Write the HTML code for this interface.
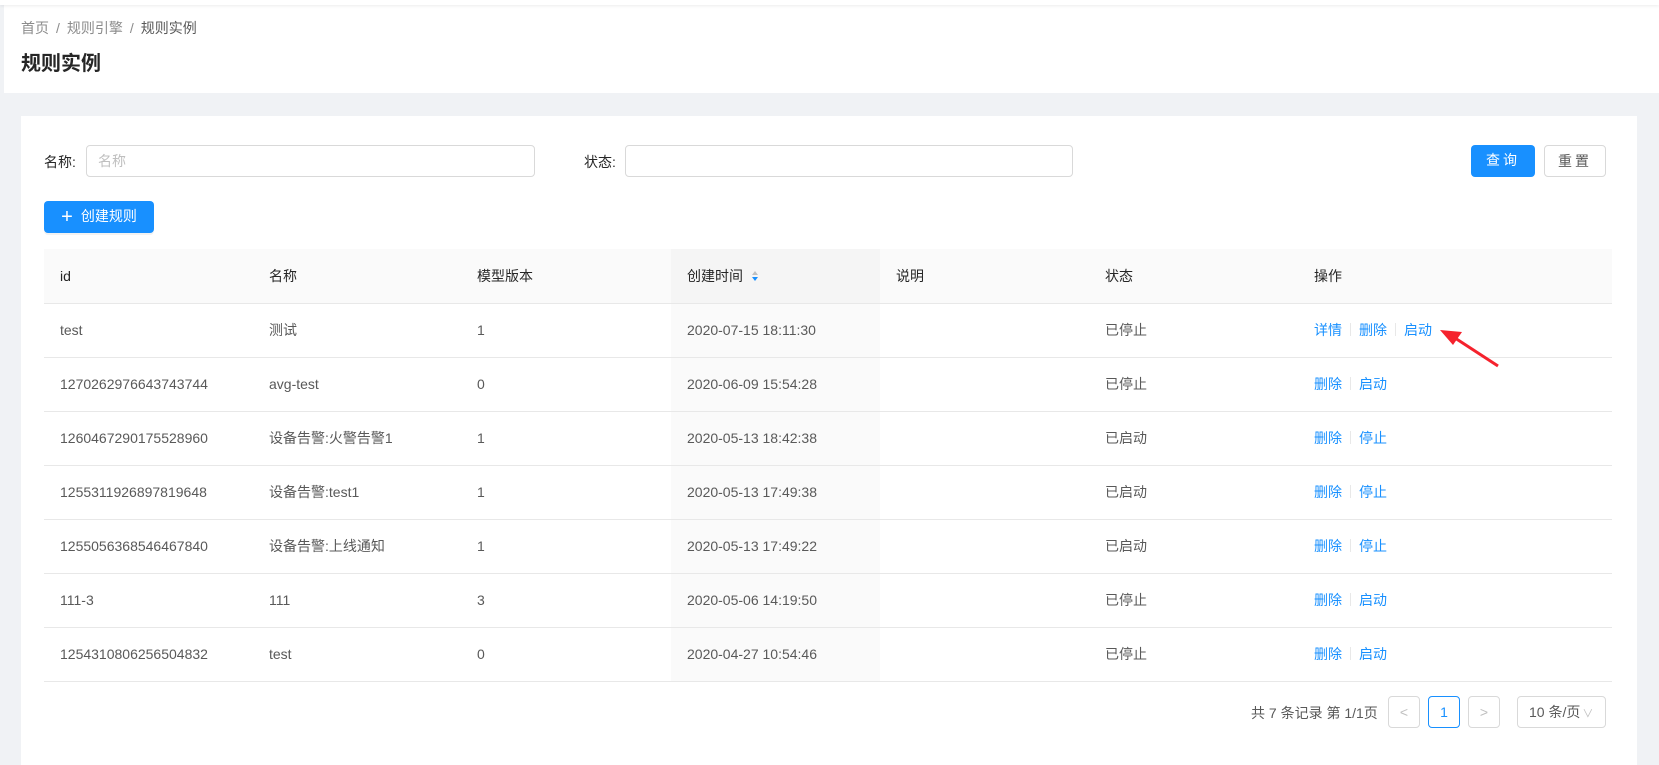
<!DOCTYPE html><html><head><meta charset="utf-8"><style>
*{box-sizing:border-box;margin:0;padding:0}
body{width:1659px;height:765px;overflow:hidden;background:#f0f2f5;font-family:"Liberation Sans","Noto Sans CJK SC",sans-serif;font-size:14px;color:#595959;position:relative}
.hdr{position:absolute;left:4px;top:5px;right:0;height:88px;background:#fff}
.topbar{position:absolute;left:0;top:0;width:1659px;height:5px;background:#fff;box-shadow:0 1px 3px rgba(0,0,0,.08)}
.bc{position:absolute;left:21px;top:18px;font-size:14px;color:#8c8c8c}
.bc span.s{margin:0 7px}
.bc .cur{color:#595959}
.title{position:absolute;left:21px;top:47px;font-size:20px;font-weight:bold;color:#262626}
.card{position:absolute;left:21px;top:116px;width:1616px;height:649px;background:#fff}
.abs{position:absolute}
.inp{position:absolute;height:32px;border:1px solid #d9d9d9;border-radius:4px;background:#fff;padding-left:11px;line-height:30px;color:#bfbfbf}
.btn{position:absolute;height:32px;border-radius:4px;line-height:30px;text-align:center;font-size:14px}
table{position:absolute;left:23px;top:133px;width:1568px;border-collapse:collapse}
th,td{text-align:left;padding-left:16px;border-bottom:1px solid #e8e8e8;font-weight:normal}
th{height:54px;background:#fafafa;color:#262626}
td{height:54px;color:#595959}
.sort{background:#f5f5f5}
td.sort{background:#fafafa}
a{color:#1890ff;text-decoration:none}
.d{display:inline-block;width:1px;height:13px;background:#e8e8e8;margin:0 8px;vertical-align:-1px}
.pg{position:absolute;height:32px;border:1px solid #d9d9d9;border-radius:4px;text-align:center;line-height:30px;color:#bfbfbf}
</style></head><body>
<div class="hdr"></div><div class="topbar"></div>
<div class="bc">首页<span class="s">/</span>规则引擎<span class="s">/</span><span class="cur">规则实例</span></div>
<div class="title">规则实例</div>
<div class="card">
<div class="abs" style="left:23px;top:36px;color:#262626">名称:</div>
<div class="inp" style="left:65px;top:29px;width:449px">名称</div>
<div class="abs" style="left:563px;top:36px;color:#262626">状态:</div>
<div class="inp" style="left:604px;top:29px;width:448px"></div>
<div class="btn" style="left:1450px;top:29px;width:64px;background:#1890ff;color:#fff;letter-spacing:3px">查询</div>
<div class="btn" style="left:1523px;top:29px;width:62px;border:1px solid #d9d9d9;color:#595959;letter-spacing:3px">重置</div>
<div class="btn" style="left:23px;top:85px;width:110px;background:#1890ff;color:#fff;box-shadow:0 2px 0 rgba(0,0,0,.05)"><span style="font-size:20px;vertical-align:-2px;margin-right:8px">+</span>创建规则</div>
<table>
<tr><th style="width:209px">id</th><th style="width:208px">名称</th><th style="width:210px">模型版本</th><th class="sort" style="width:209px">创建时间 <svg width="8" height="12" viewBox="0 0 8 12" style="vertical-align:-1px;margin-left:4px"><path d="M4 1L7 5H1z" fill="#bfbfbf"/><path d="M4 11L7 7H1z" fill="#1890ff"/></svg></th><th style="width:209px">说明</th><th style="width:209px">状态</th><th>操作</th></tr>
<tr><td>test</td><td>测试</td><td>1</td><td class="sort">2020-07-15 18:11:30</td><td></td><td>已停止</td><td><a>详情</a><span class="d"></span><a>删除</a><span class="d"></span><a>启动</a></td></tr>
<tr><td>1270262976643743744</td><td>avg-test</td><td>0</td><td class="sort">2020-06-09 15:54:28</td><td></td><td>已停止</td><td><a>删除</a><span class="d"></span><a>启动</a></td></tr>
<tr><td>1260467290175528960</td><td>设备告警:火警告警1</td><td>1</td><td class="sort">2020-05-13 18:42:38</td><td></td><td>已启动</td><td><a>删除</a><span class="d"></span><a>停止</a></td></tr>
<tr><td>1255311926897819648</td><td>设备告警:test1</td><td>1</td><td class="sort">2020-05-13 17:49:38</td><td></td><td>已启动</td><td><a>删除</a><span class="d"></span><a>停止</a></td></tr>
<tr><td>1255056368546467840</td><td>设备告警:上线通知</td><td>1</td><td class="sort">2020-05-13 17:49:22</td><td></td><td>已启动</td><td><a>删除</a><span class="d"></span><a>停止</a></td></tr>
<tr><td>111-3</td><td>111</td><td>3</td><td class="sort">2020-05-06 14:19:50</td><td></td><td>已停止</td><td><a>删除</a><span class="d"></span><a>启动</a></td></tr>
<tr><td>1254310806256504832</td><td>test</td><td>0</td><td class="sort">2020-04-27 10:54:46</td><td></td><td>已停止</td><td><a>删除</a><span class="d"></span><a>启动</a></td></tr>
</table>
<div class="abs" style="left:1230px;top:587px;color:#595959">共 7 条记录 第 1/1页</div>
<div class="pg" style="left:1367px;top:580px;width:32px">&lt;</div>
<div class="pg" style="left:1407px;top:580px;width:32px;border-color:#1890ff;color:#1890ff">1</div>
<div class="pg" style="left:1447px;top:580px;width:32px">&gt;</div>
<div class="pg" style="left:1496px;top:580px;width:89px;color:#595959;text-align:left;padding-left:11px">10 条/页<span style="color:#bfbfbf;font-size:11px;margin-left:2px">∨</span></div>
</div>
<svg class="abs" style="left:0;top:0" width="1659" height="765"><line x1="1498" y1="366" x2="1455" y2="338" stroke="#f5222d" stroke-width="3"/><path d="M1440 330L1462 332L1453 345z" fill="#f5222d"/></svg>
</body></html>
